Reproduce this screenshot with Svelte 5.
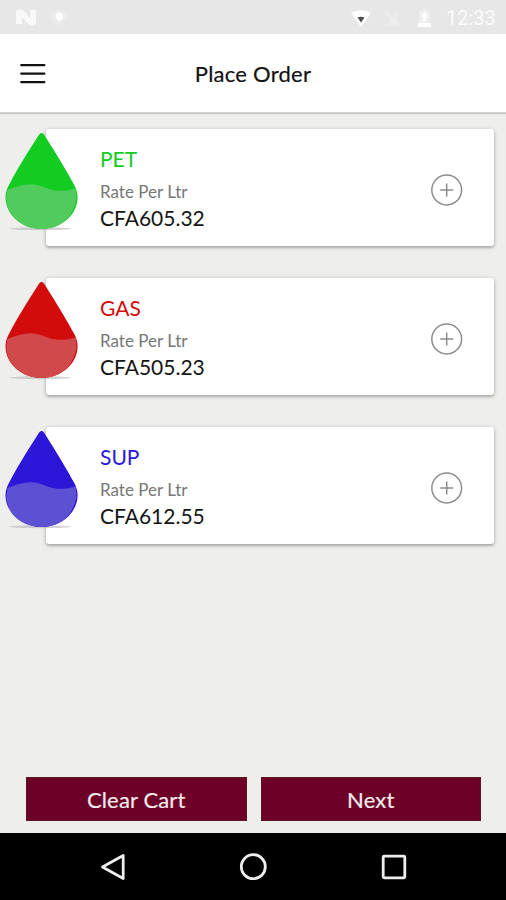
<script>
  const fuels = [
    { name: 'PET', price: 'CFA605.32', color: '#13cc22', light: '#51cb5c' },
    { name: 'GAS', price: 'CFA505.23', color: '#d20b0b', light: '#d04a4b' },
    { name: 'SUP', price: 'CFA612.55', color: '#2c16d8', light: '#5c50d3' }
  ];
</script>

<div class="screen">
  <div class="status">
    <svg class="left" width="80" height="34" viewBox="0 0 80 34">
      <path d="M16 11 Q20 8 23 10 L30 18 V10 H36 V24 Q32 27 28 24 L22 17 V24 H16Z" fill="#f8f8f8" />
      <path d="M59 10 L66 12 V18 Q65 23 59 25 Q54 23 53 18 V12Z" fill="#eaeaea" stroke="#efefef" />
      <path d="M56 14 L59 12 L63 14 V18 L59 22 L56 18Z" fill="#fff" />
    </svg>
    <svg width="90" height="34" viewBox="346 0 90 34">
      <path d="M351 13 Q361 7 371 13 L361 27Z" fill="#fdfdfd" />
      <path d="M357.500 17.500 Q361 16 364.500 17.500 L361 22.500Z" fill="#4c4c4c" />
      <path d="M385 26 L398 11 V26Z" fill="#ebebeb" />
      <path d="M385 12 L399 26" stroke="#eeeeee" stroke-width="2" />
      <path d="M419 11 H422 V9 H427 V11 H430 V23 H431 V27 H418 V23 H419Z" fill="#efefef" />
      <path d="M424.500 13 V21" stroke="#fff" stroke-width="3" />
      <path d="M420.500 17 L424.500 12 L428.500 17Z M418 23 H431 V27 H418Z" fill="#fff" />
    </svg>
    <span class="time">12:33</span>
  </div>

  <header>
    <svg class="menu" width="26" height="22" viewBox="0 0 26 22">
      <path d="M1.300 2.200 H24.300 M1.300 10.700 H24.300 M1.300 19.200 H24.300" stroke="#111" stroke-width="2.300" stroke-linecap="round" />
    </svg>
    <h1>Place Order</h1>
  </header>

  <main>
    {#each fuels as fuel}
      <section class="card">
        <svg class="drop" width="80" height="104" viewBox="0 0 80 104">
          <defs>
            <clipPath id={'drop-' + fuel.name}>
              <path d="M36.500 2 Q38.700 -.2 41 2.500 C47 12 60 32 71 52.500 C73.500 57 74.600 61 74.600 65 C74.600 83 58 97 38.600 97 C19 97 2.500 83 2.500 65 C2.500 61 3.700 57 6.200 52.500 C17 32 30 12 36.500 2Z" />
            </clipPath>
          </defs>
          <ellipse cx="37.500" cy="96.700" rx="31" ry="1.500" fill="#aaa" opacity=".5" />
          <g clip-path={'url(#drop-' + fuel.name + ')'}>
            <rect width="80" height="104" fill={fuel.color} />
            <path d="M4.500 58 C15 54 25 50.500 36 53.500 C46 56.500 53 62 73 56.500 L73.500 67 Q69 91 45 98 H30 Q4 88 3.300 66Z" fill={fuel.light} />
          </g>
        </svg>
        <div class="info">
          <div class="name" style:color={fuel.color}>{fuel.name}</div>
          <div class="rate">Rate Per Ltr</div>
          <div class="price">{fuel.price}</div>
        </div>
        <svg class="add" width="34" height="34" viewBox="0 0 34 34" fill="none" stroke="#8c8c8c" stroke-width="1.500">
          <circle cx="16.700" cy="17" r="14.900" />
          <path d="M10.200 17 H23.200 M16.700 10.500 V23.500" />
        </svg>
      </section>
    {/each}
  </main>

  <div class="actions">
    <button>Clear Cart</button>
    <button>Next</button>
  </div>

  <nav>
    <svg width="28" height="30" viewBox="0 0 28 30"><path d="M24.200 3.500 V26.500 L3.500 15Z" /></svg>
    <svg width="28" height="30" viewBox="0 0 28 30"><circle cx="14.300" cy="14.700" r="12" /></svg>
    <svg width="28" height="30" viewBox="0 0 28 30"><rect x="3.200" y="4.200" width="21.600" height="21.600" rx="1" /></svg>
  </nav>
</div>

<style>
  .screen {
    width: 506px;
    height: 900px;
    overflow: hidden;
    display: flex;
    flex-direction: column;
    background: #eeeeec;
    font-family: Lato, sans-serif;
    white-space: nowrap;
  }
  .status {
    height: 34px;
    flex: none;
    display: flex;
    align-items: center;
    background: #e7e7e7;
  }
  .left { margin-right: auto; }
  .time {
    width: 60px;
    margin-left: 10px;
    font: 20px/34px Roboto, sans-serif;
    padding-top: 2px;
    color: #fbfbfb;
  }
  header {
    height: 79px;
    box-sizing: border-box;
    flex: none;
    display: grid;
    grid-template-columns: 26px 1fr 26px;
    align-items: center;
    padding: 0 20px;
    background: #fff;
    border-bottom: 1px solid #d4d5d1;
    box-shadow: 0 1px 1px #c9cac5;
  }
  .menu { margin-top: 2px; }
  h1 {
    margin: 2px 0 0;
    text-align: center;
    font-size: 22px;
    font-weight: 400;
    line-height: 28px;
    letter-spacing: .25px;
    color: #111;
    -webkit-text-stroke: .2px;
  }
  main {
    flex: 1;
    display: flex;
    flex-direction: column;
    gap: 32.300px;
    padding: 15.500px 12px 0 46px;
  }
  .card {
    height: 117px;
    position: relative;
    display: flex;
    align-items: center;
    justify-content: space-between;
    padding: 0 30px 0 54px;
    box-sizing: border-box;
    border-radius: 3px;
    background: #fff;
    box-shadow: 0 1px 4px rgba(0, 0, 0, .28), 0 2px 2px rgba(0, 0, 0, .12);
  }
  .drop {
    position: absolute;
    left: -43px;
    top: 3px;
  }
  .info { padding-top: 1px; }
  .name { font-size: 21px; line-height: 28px; }
  .rate {
    margin-top: 6px;
    font-size: 17px;
    line-height: 26px;
    color: #777;
  }
  .price { font-size: 21px; line-height: 26px; color: #151515; }
  .add { margin-top: 5px; }
  .actions {
    display: flex;
    gap: 14px;
    padding: 0 25px 12px 26px;
  }
  button {
    flex: 1;
    height: 44px;
    padding: 2px 0 0;
    border: 1px solid #5b1422;
    background: #6d0026;
    color: #f5eaed;
    font: 22px/28px Lato, sans-serif;
    letter-spacing: .15px;
    -webkit-text-stroke: .2px;
  }
  nav {
    height: 67px;
    flex: none;
    display: flex;
    align-items: center;
    justify-content: center;
    gap: 112.500px;
    background: #000;
  }
  nav svg {
    fill: none;
    stroke: #eee;
    stroke-width: 2.800;
    stroke-linejoin: round;
  }
</style>
